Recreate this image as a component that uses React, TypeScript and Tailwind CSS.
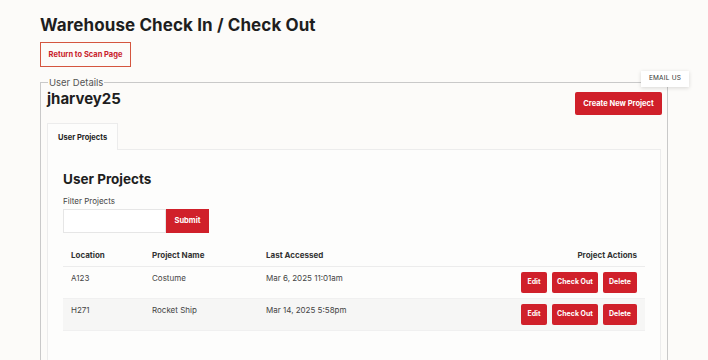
import React from "react";

const rows = [
  { loc: "A123", name: "Costume", date: "Mar 6, 2025 11:01am" },
  { loc: "H271", name: "Rocket Ship", date: "Mar 14, 2025 5:58pm" },
];

function RedBtn({ children, className = "" }: { children: React.ReactNode; className?: string }) {
  return (
    <button className={`bg-[#d0202a] text-white font-bold rounded-[2px] ${className}`}>{children}</button>
  );
}

export default function App() {
  return (
    <div
      className="relative w-[708px] h-[360px] overflow-hidden bg-[#fcfbf9] text-[#222]"
      style={{ fontFamily: "Inter, 'Open Sans', sans-serif" }}
    >
      <div className="pl-[40px] pt-[15px] pr-[41px]">
        <h1 className="text-[17px] font-bold leading-[20px] tracking-[0.1px] text-[#1e1e1e]">
          Warehouse Check In / Check Out
        </h1>
        <button className="mt-[7px] h-[25px] w-[91px] border border-[#d4553f] text-[#c8202a] text-[7.5px] font-bold">
          Return to Scan Page
        </button>
        <fieldset className="mt-[10px] border border-[#c9c9c9] h-[400px] px-[6px]">
          <legend className="text-[9.5px] text-[#555] px-[1px] ml-[1px] leading-[11px]">User Details</legend>
          <div className="flex items-start justify-between">
            <div className="text-[15px] font-bold leading-[20px] mt-[1px] text-[#1e1e1e]">jharvey25</div>
            <RedBtn className="mt-[4px] h-[23px] w-[87px] text-[7.5px] -mr-[1px]">Create New Project</RedBtn>
          </div>
          <div className="mt-[8px] flex">
            <div className="w-[71px] h-[27px] border border-b-0 border-[#ececec] bg-[#fdfdfc] text-[7.5px] font-bold flex items-center pl-[10px] pt-[1px] relative z-10 -mb-px">
              User Projects
            </div>
          </div>
          <div className="border border-[#ececec] bg-[#fdfdfc] h-[260px] pl-[15px] pr-[15px]">
            <h2 className="mt-[19px] text-[13.5px] font-bold leading-[20px] text-[#1e1e1e]">User Projects</h2>
            <div className="mt-[7px] text-[8px] text-[#444] leading-[10px]">Filter Projects</div>
            <div className="mt-[3px] flex">
              <div className="w-[103px] h-[24px] border border-[#e6e6e6] bg-white" />
              <RedBtn className="w-[43px] h-[24px] text-[7.5px] rounded-none">Submit</RedBtn>
            </div>
            <table className="mt-[11px] w-[582px] text-[8px] border-collapse">
              <thead>
                <tr className="h-[22px] border-b border-[#ececec] font-bold text-left text-[#333]">
                  <th className="pl-[8px] w-[89px]">Location</th>
                  <th className="w-[114px]">Project Name</th>
                  <th>Last Accessed</th>
                  <th className="text-right pr-[8px]">Project Actions</th>
                </tr>
              </thead>
              <tbody className="text-[#444]">
                {rows.map((r, i) => (
                  <tr key={r.loc} className={`h-[32px] ${i === 1 ? "bg-[#f6f6f5]" : ""} border-b border-[#f0f0f0]`}>
                    <td className="pl-[8px] align-top pt-[5px]">{r.loc}</td>
                    <td className="align-top pt-[5px]">{r.name}</td>
                    <td className="align-top pt-[5px]">{r.date}</td>
                    <td className="pr-[8px]">
                      <div className="flex justify-end gap-[5px]">
                        <RedBtn className="w-[26px] h-[21px] text-[7px]">Edit</RedBtn>
                        <RedBtn className="w-[46px] h-[21px] text-[7px]">Check Out</RedBtn>
                        <RedBtn className="w-[34px] h-[21px] text-[7px]">Delete</RedBtn>
                      </div>
                    </td>
                  </tr>
                ))}
              </tbody>
            </table>
          </div>
        </fieldset>
      </div>
      <div className="absolute left-[641px] top-[71px] w-[48px] h-[16px] bg-white shadow-[0_1px_4px_rgba(0,0,0,0.15)] text-[6.5px] text-[#333] flex items-center justify-center tracking-[0.2px]">
        EMAIL US
      </div>
    </div>
  );
}
